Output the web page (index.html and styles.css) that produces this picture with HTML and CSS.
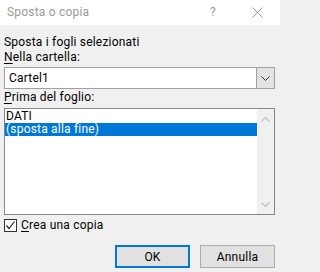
FILE: index.html
```html
<!DOCTYPE html>
<html>
<head>
<meta charset="utf-8">
<link rel="stylesheet" href="styles.css">
</head>
<body>
<div class="dialog">
  <div class="titlebar">
    <span class="title">Sposta o copia</span>
    <span class="help">?</span>
    <span class="close">
      <svg width="11" height="11" viewBox="0 0 11 11"><path d="M0.5 0.5 L10.5 10.5 M10.5 0.5 L0.5 10.5" stroke="#9a9a9a" stroke-width="1" fill="none"/></svg>
    </span>
  </div>
  <div class="content">
    <div class="label first">Sposta i fogli selezionati</div>
    <div class="label"><u>N</u>ella cartella:</div>
    <div class="combo">
      <div class="combo-value">Cartel1</div>
      <div class="combo-btn">
        <svg width="9" height="5" viewBox="0 0 9 5"><path d="M0.5 0.5 L4.5 4.5 L8.5 0.5" stroke="#333" stroke-width="1" fill="none"/></svg>
      </div>
    </div>
    <div class="label second"><u>P</u>rima del foglio:</div>
    <div class="listbox">
      <div class="items">
        <div class="item">DATI</div>
        <div class="item selected">(sposta alla fine)</div>
      </div>
      <div class="scrollbar">
        <svg width="9" height="5" viewBox="0 0 9 5"><path d="M0.5 4.5 L4.5 0.5 L8.5 4.5" stroke="#c4c4c4" stroke-width="1.4" fill="none"/></svg>
        <svg width="9" height="5" viewBox="0 0 9 5"><path d="M0.5 0.5 L4.5 4.5 L8.5 0.5" stroke="#c4c4c4" stroke-width="1.4" fill="none"/></svg>
      </div>
    </div>
    <label class="check-row">
      <span class="checkbox">
        <svg width="11" height="11" viewBox="0 0 11 11"><path d="M1.5 5.5 L4 8.5 L9.5 1.5" stroke="#222" stroke-width="1.2" fill="none"/></svg>
      </span>
      <span class="check-label"><u>C</u>rea una copia</span>
    </label>
    <div class="buttons">
      <button class="btn default">OK</button>
      <button class="btn">Annulla</button>
    </div>
  </div>
</div>
</body>
</html>
```

FILE: styles.css
```css
html, body {
  margin: 0;
  padding: 0;
}
body {
  width: 280px;
  height: 272px;
  background: #f0f0f0;
  font-family: Roboto, "Noto Sans", sans-serif;
  font-size: 12px;
  letter-spacing: 0.2px;
  color: #000;
  overflow: hidden;
}
.dialog {
  display: flex;
  flex-direction: column;
  height: 272px;
}
.titlebar {
  height: 25px;
  background: #fff;
  display: flex;
  align-items: center;
  padding-left: 7px;
  box-sizing: border-box;
}
.title {
  color: #999;
  flex: 1;
  font-size: 12px;
  line-height: 15px;
  margin-top: -1px;
}
.help {
  color: #999;
  width: 12px;
  margin-right: 30px;
  font-size: 12px;
  margin-top: -1px;
}
.close {
  width: 11px;
  height: 11px;
  margin-right: 17px;
  display: flex;
}
.content {
  padding: 0 5px 0 4px;
  display: flex;
  flex-direction: column;
}
.label {
  line-height: 15px;
  height: 15px;
  white-space: nowrap;
}
.label.first {
  margin-top: 10px;
}
.label.second {
  margin-top: 1px;
}
u {
  text-decoration: underline;
  text-underline-offset: 2px;
}
.combo {
  margin-top: 2px;
  height: 22px;
  box-sizing: border-box;
  border: 1px solid #a0a0a0;
  background: #fff;
  display: flex;
}
.combo-value {
  flex: 1;
  padding-left: 4px;
  line-height: 20px;
}
.combo-btn {
  width: 17px;
  background: #e3e3e3;
  border-left: 1px solid #a0a0a0;
  display: flex;
  align-items: center;
  justify-content: center;
}
.listbox {
  margin-top: 3px;
  height: 107px;
  box-sizing: border-box;
  border: 1px solid #828790;
  background: #fff;
  display: flex;
}
.items {
  flex: 1;
  padding-top: 1px;
}
.item {
  height: 13px;
  line-height: 13px;
  padding-left: 1px;
  white-space: nowrap;
}
.item.selected {
  background: #0078d7;
  color: #fff;
}
.scrollbar {
  width: 17px;
  background: #f0f0f0;
  display: flex;
  flex-direction: column;
  align-items: center;
  justify-content: space-between;
  padding: 8px 0 7px;
  box-sizing: border-box;
}
.check-row {
  margin-top: 4px;
  display: flex;
  align-items: center;
  height: 13px;
}
.checkbox {
  width: 13px;
  height: 13px;
  box-sizing: border-box;
  border: 1px solid #333;
  background: #fff;
  display: flex;
  align-items: center;
  justify-content: center;
}
.check-label {
  margin-left: 4px;
  line-height: 13px;
}
.buttons {
  margin-top: 13px;
  display: flex;
  justify-content: flex-end;
  gap: 10px;
}
.btn {
  width: 75px;
  height: 23px;
  box-sizing: border-box;
  background: #e1e1e1;
  border: 1px solid #adadad;
  font-family: inherit;
  font-size: 12px;
  letter-spacing: 0.2px;
  color: #000;
  padding: 0;
  margin: 0;
}
.btn.default {
  border: 2px solid #0078d7;
}
```
